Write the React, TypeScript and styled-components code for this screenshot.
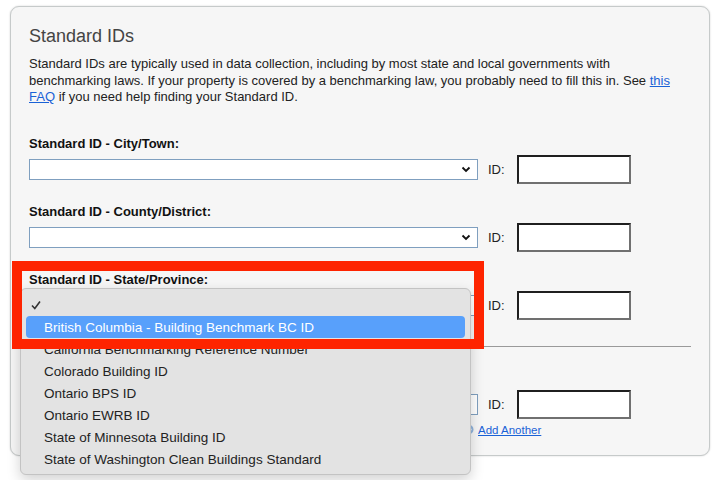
import React from "react";
import styled, { createGlobalStyle } from "styled-components";

const GlobalStyle = createGlobalStyle`
  html, body {
    margin: 0;
    padding: 0;
    background: #ffffff;
  }
  body {
    font-family: "Liberation Sans", Arial, Helvetica, sans-serif;
    color: #222;
  }
`;

const Page = styled.div`
  position: relative;
  width: 717px;
  height: 480px;
  overflow: hidden;
  box-sizing: border-box;
  padding: 6px 0 0 10px;
`;

const Panel = styled.section`
  width: 700px;
  height: 450px;
  box-sizing: border-box;
  border: 1px solid #c6caca;
  border-radius: 9px;
  background: #f6f6f6;
  box-shadow: 0 0 2px rgba(0, 0, 0, 0.18);
  padding: 18px 18px 0;
`;

const Title = styled.h2`
  margin: 0;
  font-size: 18px;
  line-height: 22px;
  font-weight: normal;
  color: #444;
`;

const Intro = styled.p`
  margin: 9px 0 0;
  font-size: 13px;
  line-height: 16.5px;
  color: #222;
`;

const Link = styled.a`
  color: #1a62d6;
  text-decoration: underline;
  cursor: pointer;
`;

const Fields = styled.div`
  display: flex;
  flex-direction: column;
  gap: 20px;
  margin-top: 30px;
`;

const Field = styled.div<{ $top?: number }>`
  display: flex;
  flex-direction: column;
  margin-top: ${(p) => p.$top ?? 0}px;
`;

const FieldLabel = styled.label`
  font-size: 13px;
  line-height: 16px;
  font-weight: bold;
  color: #111;
  margin-bottom: 3px;
`;

const Row = styled.div`
  display: flex;
  align-items: center;
  height: 29px;
`;

const SelectBox = styled.div`
  width: 449px;
  height: 21px;
  box-sizing: border-box;
  border: 1px solid #7f9fbf;
  background: #fff;
  display: flex;
  align-items: center;
  justify-content: flex-end;
  padding-right: 6px;
`;

const IdLabel = styled.span`
  margin-left: 10px;
  font-size: 13px;
  color: #222;
`;

const IdInput = styled.div`
  margin-left: 12px;
  width: 114px;
  height: 29px;
  box-sizing: border-box;
  background: #fff;
  border: 2px solid;
  border-color: #1f1f1f #707070 #707070 #1f1f1f;
`;

const Divider = styled.hr`
  margin: 26px 0 0;
  border: none;
  border-top: 1px solid #9a9a9a;
  height: 0;
`;

const AddRow = styled.div`
  display: flex;
  align-items: center;
  gap: 4px;
  margin: 4px 0 0 434px;
  font-size: 11.5px;
  line-height: 14px;
`;

const Menu = styled.div`
  position: absolute;
  left: 20px;
  top: 288px;
  width: 451px;
  height: 187px;
  box-sizing: border-box;
  padding: 5px;
  border: 1px solid #c3c3c3;
  border-radius: 6px;
  background: #e3e3e3;
  box-shadow: 0 5px 14px rgba(0, 0, 0, 0.18);
  font-family: "Liberation Sans", Arial, sans-serif;
  font-size: 13.5px;
  z-index: 5;
`;

const MenuItem = styled.div<{ $active?: boolean }>`
  height: 22px;
  display: flex;
  align-items: center;
  padding-left: 18px;
  box-sizing: border-box;
  border-radius: 4px;
  color: ${(p) => (p.$active ? "#fff" : "#222")};
  background: ${(p) => (p.$active ? "#58a0fb" : "transparent")};
  position: relative;
`;

const Check = styled.svg`
  position: absolute;
  left: 5px;
  top: 6px;
`;

const Highlight = styled.div`
  position: absolute;
  left: 12px;
  top: 261px;
  width: 472px;
  height: 88px;
  box-sizing: border-box;
  border: 10px solid #fe2400;
  z-index: 10;
  pointer-events: none;
`;

const Chevron = () => (
  <svg width="10" height="7" viewBox="0 0 10 7">
    <path d="M1.5 1.5 L5 5 L8.5 1.5" fill="none" stroke="#111" strokeWidth="1.8" />
  </svg>
);

const PlusIcon = () => (
  <svg width="11" height="11" viewBox="0 0 11 11">
    <circle cx="5.5" cy="5.5" r="5" fill="#8fb3dc" />
    <path d="M5.5 2.5v6M2.5 5.5h6" stroke="#fff" strokeWidth="1.5" />
  </svg>
);

type IdFieldProps = {
  label: string;
  top?: number;
};

const IdField = ({ label, top }: IdFieldProps) => (
  <Field $top={top}>
    <FieldLabel>{label}</FieldLabel>
    <Row>
      <SelectBox>
        <Chevron />
      </SelectBox>
      <IdLabel>ID:</IdLabel>
      <IdInput />
    </Row>
  </Field>
);

const options = [
  "British Columbia - Building Benchmark BC ID",
  "California Benchmarking Reference Number",
  "Colorado Building ID",
  "Ontario BPS ID",
  "Ontario EWRB ID",
  "State of Minnesota Building ID",
  "State of Washington Clean Buildings Standard",
];

export default function App() {
  return (
    <Page>
      <GlobalStyle />
      <Panel>
        <Title>Standard IDs</Title>
        <Intro>
          Standard IDs are typically used in data collection, including by most state and local
          governments with benchmarking laws. If your property is covered by a benchmarking law,
          you probably need to fill this in. See <Link>this FAQ</Link> if you need help finding
          your Standard ID.
        </Intro>
        <Fields>
          <IdField label="Standard ID - City/Town:" />
          <IdField label="Standard ID - County/District:" />
          <IdField label="Standard ID - State/Province:" />
        </Fields>
        <Divider />
        <Field $top={24}>
          <FieldLabel>Standard ID - Other:</FieldLabel>
          <Row>
            <SelectBox>
              <Chevron />
            </SelectBox>
            <IdLabel>ID:</IdLabel>
            <IdInput />
          </Row>
        </Field>
        <AddRow>
          <PlusIcon />
          <Link>Add Another</Link>
        </AddRow>
      </Panel>

      <Menu>
        <MenuItem>
          <Check width="10" height="10" viewBox="0 0 10 10">
            <path d="M1 5.5 L3.8 8.5 L9 1.5" fill="none" stroke="#333" strokeWidth="1.6" />
          </Check>
        </MenuItem>
        {options.map((o, i) => (
          <MenuItem key={o} $active={i === 0}>
            {o}
          </MenuItem>
        ))}
      </Menu>
      <Highlight />
    </Page>
  );
}
